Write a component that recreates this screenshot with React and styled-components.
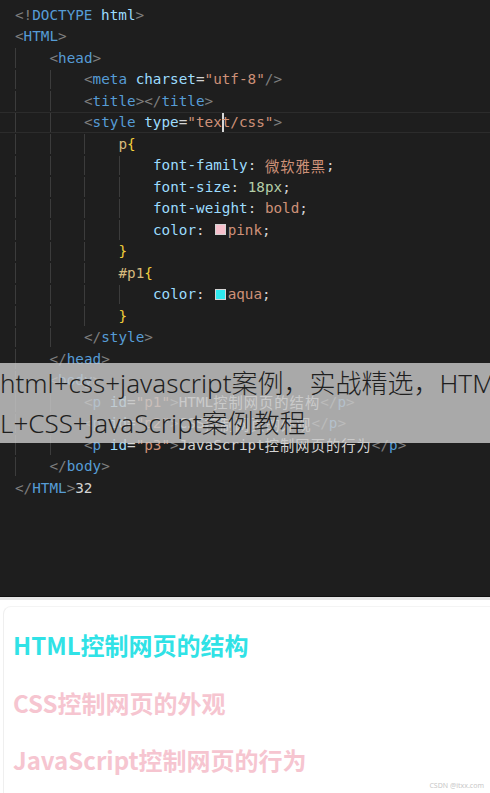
import React from 'react';
import styled, { createGlobalStyle } from 'styled-components';

const GlobalStyle = createGlobalStyle`
    html, body {
        margin: 0;
        padding: 0;
        background: #ffffff;
    }
    body {
        width: 490px;
        height: 793px;
        overflow: hidden;
        font-family: 'Noto Sans', 'Noto Sans CJK SC', sans-serif;
    }
`;

const COLORS = {
    br: '#7f7f7f',
    tag: '#569cd6',
    attr: '#9cdcfe',
    str: '#ce9178',
    txt: '#d4d4d4',
    sel: '#d7ba7d',
    brace: '#f2cf3a',
    num: '#b5cea8',
};

const Page = styled.div`
    display: flex;
    flex-direction: column;
    width: 490px;
    height: 793px;
    overflow: hidden;
`;

const Editor = styled.div`
    position: relative;
    height: 597px;
    flex: none;
    background: #1e1e1e;
    padding-top: 4px;
    box-sizing: border-box;
    border-bottom: 1px solid #111111;
    overflow: hidden;
`;

const CodeLine = styled.div`
    display: flex;
    align-items: center;
    height: 21.5px;
    padding-left: 15px;
    box-sizing: border-box;
    font-family: 'DejaVu Sans Mono', 'Noto Sans CJK SC', monospace;
    font-size: 14.3px;
    white-space: pre;
    border-top: 1px solid ${(p) => (p.$current ? '#2c2c2c' : 'transparent')};
    border-bottom: 1px solid ${(p) => (p.$current ? '#2c2c2c' : 'transparent')};
`;

const Indent = styled.span`
    display: inline-block;
    align-self: stretch;
    width: 34.5px;
    flex: none;
    border-left: 1px solid #3c3c3c;
    box-sizing: border-box;
`;

const Tok = styled.span`
    color: ${(p) => COLORS[p.$t] || COLORS.txt};
    letter-spacing: ${(p) => (p.$cjk ? '1px' : '0')};
`;

const Swatch = styled.span`
    display: inline-block;
    width: 11px;
    height: 11px;
    margin: 0 2px 0 10px;
    background: ${(p) => p.$color};
    border: 1px solid #d4d4d4;
    box-sizing: border-box;
`;

const Cursor = styled.span`
    display: inline-block;
    width: 2px;
    height: 19px;
    margin-right: -2px;
    background: #d8d8d8;
`;

const Caption = styled.div`
    position: absolute;
    top: 363px;
    left: 0;
    width: 490px;
    height: 80px;
    background: rgba(200, 200, 200, 0.82);
    color: #1f1f1f;
    font-family: 'Noto Sans', 'Noto Sans CJK SC', sans-serif;
    font-weight: 300;
    font-size: 26px;
    line-height: 40px;
    word-break: break-all;
    overflow: hidden;
`;

const CaptionText = styled.div`
    width: 506px;
`;

const Preview = styled.div`
    flex: 1;
    display: flex;
    flex-direction: column;
    background: #ffffff;
    border-top: 3px solid #e6e6e6;
    position: relative;
`;

const PreviewBody = styled.div`
    flex: 1;
    display: flex;
    flex-direction: column;
    gap: 23.5px;
    margin: 6px 0 0 3px;
    padding: 21px 0 0 9px;
    border-left: 1px solid #efefef;
    border-top: 1px solid #f4f4f4;
    border-top-left-radius: 8px;
`;

const PreviewLine = styled.p`
    margin: 0;
    font-family: 'Noto Sans CJK SC', sans-serif;
    font-weight: 700;
    font-size: 24px;
    line-height: 34px;
    color: ${(p) => p.$color};
`;

const Watermark = styled.span`
    position: absolute;
    right: 6px;
    bottom: 3px;
    font-family: 'Noto Sans', sans-serif;
    font-size: 7px;
    color: #c8c8c8;
`;

const t = (type, text, cjk) => ({ type, text, cjk });

const LINES = [
    { d: 0, toks: [t('br', '<!'), t('tag', 'DOCTYPE'), t('txt', ' '), t('attr', 'html'), t('br', '>')] },
    { d: 0, toks: [t('br', '<'), t('tag', 'HTML'), t('br', '>')] },
    { d: 1, toks: [t('br', '<'), t('tag', 'head'), t('br', '>')] },
    {
        d: 2,
        toks: [t('br', '<'), t('tag', 'meta'), t('txt', ' '), t('attr', 'charset'), t('txt', '='), t('str', '"utf-8"'), t('br', '/>')],
    },
    { d: 2, toks: [t('br', '<'), t('tag', 'title'), t('br', '></'), t('tag', 'title'), t('br', '>')] },
    {
        d: 2,
        current: true,
        toks: [t('br', '<'), t('tag', 'style'), t('txt', ' '), t('attr', 'type'), t('txt', '='), t('str', '"tex'), 'cursor', t('str', 't/css"'), t('br', '>')],
    },
    { d: 3, toks: [t('sel', 'p'), t('brace', '{')] },
    { d: 4, toks: [t('attr', 'font-family'), t('txt', ': '), t('str', '微软雅黑', true), t('txt', ';')] },
    { d: 4, toks: [t('attr', 'font-size'), t('txt', ': '), t('num', '18px'), t('txt', ';')] },
    { d: 4, toks: [t('attr', 'font-weight'), t('txt', ': '), t('str', 'bold'), t('txt', ';')] },
    { d: 4, toks: [t('attr', 'color'), t('txt', ':'), { swatch: '#f6c0cc' }, t('str', 'pink'), t('txt', ';')] },
    { d: 3, toks: [t('brace', '}')] },
    { d: 3, toks: [t('sel', '#p1'), t('brace', '{')] },
    { d: 4, toks: [t('attr', 'color'), t('txt', ':'), { swatch: '#2ee8ee' }, t('str', 'aqua'), t('txt', ';')] },
    { d: 3, toks: [t('brace', '}')] },
    { d: 2, toks: [t('br', '</'), t('tag', 'style'), t('br', '>')] },
    { d: 1, toks: [t('br', '</'), t('tag', 'head'), t('br', '>')] },
    { d: 1, toks: [t('br', '<'), t('tag', 'body'), t('br', '>')] },
    {
        d: 2,
        toks: [t('br', '<'), t('tag', 'p'), t('txt', ' '), t('attr', 'id'), t('txt', '='), t('str', '"p1"'), t('br', '>'), t('txt', 'HTML'), t('txt', '控制网页的结构', true), t('br', '</'), t('tag', 'p'), t('br', '>')],
    },
    {
        d: 2,
        toks: [t('br', '<'), t('tag', 'p'), t('txt', ' '), t('attr', 'id'), t('txt', '='), t('str', '"p2"'), t('br', '>'), t('txt', 'CSS'), t('txt', '控制网页的外观', true), t('br', '</'), t('tag', 'p'), t('br', '>')],
    },
    {
        d: 2,
        toks: [t('br', '<'), t('tag', 'p'), t('txt', ' '), t('attr', 'id'), t('txt', '='), t('str', '"p3"'), t('br', '>'), t('txt', 'JavaScript'), t('txt', '控制网页的行为', true), t('br', '</'), t('tag', 'p'), t('br', '>')],
    },
    { d: 1, toks: [t('br', '</'), t('tag', 'body'), t('br', '>')] },
    { d: 0, toks: [t('br', '</'), t('tag', 'HTML'), t('br', '>'), t('txt', '32')] },
];

function Line({ line }) {
    return (
        <CodeLine $current={line.current}>
            {Array.from({ length: line.d }).map((_, i) => (
                <Indent key={i} />
            ))}
            {line.toks.map((tok, i) => {
                if (tok === 'cursor') return <Cursor key={i} />;
                if (tok.swatch) return <Swatch key={i} $color={tok.swatch} />;
                return (
                    <Tok key={i} $t={tok.type} $cjk={tok.cjk}>
                        {tok.text}
                    </Tok>
                );
            })}
        </CodeLine>
    );
}

export default function App() {
    return (
        <Page>
            <GlobalStyle />
            <Editor>
                {LINES.map((line, i) => (
                    <Line key={i} line={line} />
                ))}
                <Caption>
                    <CaptionText>html+css+javascript案例，实战精选，HTML+CSS+JavaScript案例教程</CaptionText>
                </Caption>
            </Editor>
            <Preview>
                <PreviewBody>
                    <PreviewLine $color="#30e2e6">HTML控制网页的结构</PreviewLine>
                    <PreviewLine $color="#f6c5d0">CSS控制网页的外观</PreviewLine>
                    <PreviewLine $color="#f6c5d0">JavaScript控制网页的行为</PreviewLine>
                </PreviewBody>
                <Watermark>CSDN @itxx.com</Watermark>
            </Preview>
        </Page>
    );
}
